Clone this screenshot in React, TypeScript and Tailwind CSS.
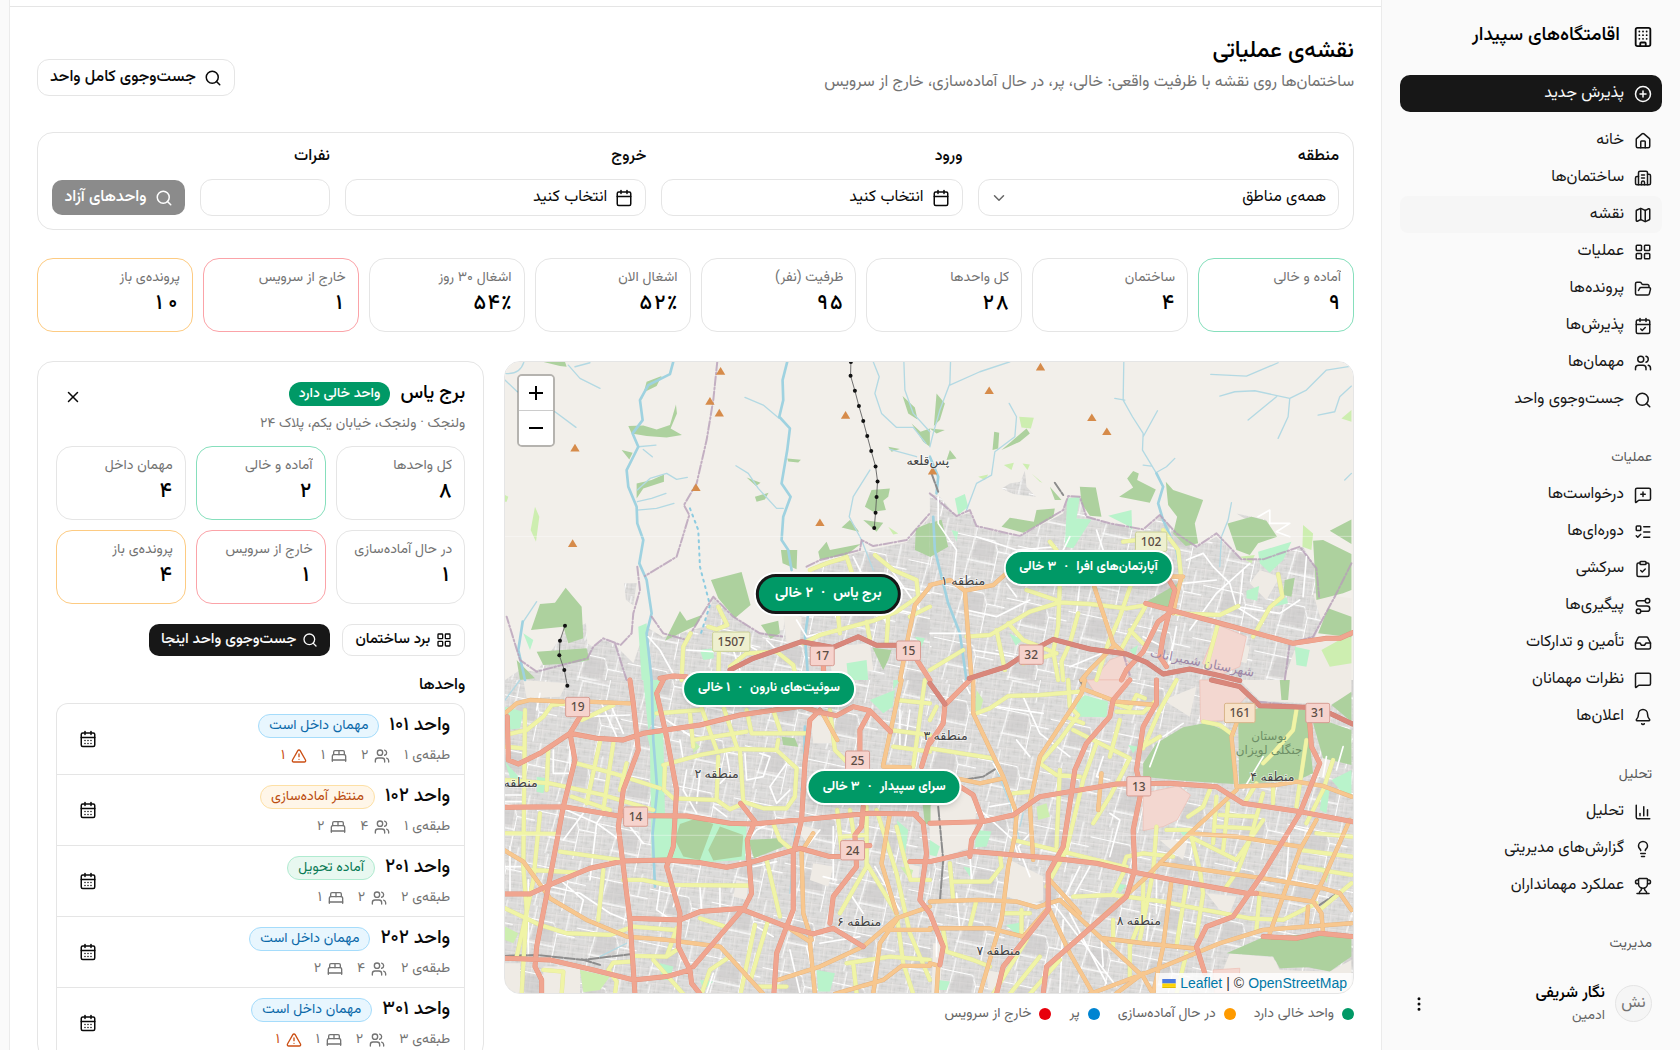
import type { ReactNode } from "react"
import {
  BedDouble,
  Bell,
  Building,
  Building2,
  Calendar,
  CalendarCheck,
  CalendarDays,
  ChartColumn,
  ChevronDown,
  CirclePlus,
  ClipboardCheck,
  EllipsisVertical,
  FolderOpen,
  House,
  Inbox,
  LayoutGrid,
  Lightbulb,
  ListTodo,
  Map as MapIcon,
  MessageSquare,
  MessageSquarePlus,
  Route,
  Search,
  TriangleAlert,
  Trophy,
  Users,
  X,
  type LucideIcon,
} from "lucide-react"
import clsx from "clsx"

interface NavItem {
  label: string
  icon: LucideIcon
  active?: boolean
}

type Tone = "plain" | "green" | "red" | "amber"

interface Stat {
  label: string
  value: string
  tone?: Tone
}

interface Unit {
  name: string
  floor: string
  status: "inside" | "waiting" | "ready"
  guests: string
  beds: string
  alerts?: string
}

const mainNav: NavItem[] = [
  { label: "خانه", icon: House },
  { label: "ساختمان‌ها", icon: Building2 },
  { label: "نقشه", icon: MapIcon, active: true },
  { label: "عملیات", icon: LayoutGrid },
  { label: "پرونده‌ها", icon: FolderOpen },
  { label: "پذیرش‌ها", icon: CalendarCheck },
  { label: "مهمان‌ها", icon: Users },
  { label: "جست‌وجوی واحد", icon: Search },
]

const operationsNav: NavItem[] = [
  { label: "درخواست‌ها", icon: MessageSquarePlus },
  { label: "دوره‌ای‌ها", icon: ListTodo },
  { label: "سرکشی", icon: ClipboardCheck },
  { label: "پیگیری‌ها", icon: Route },
  { label: "تأمین و تدارکات", icon: Inbox },
  { label: "نظرات مهمانان", icon: MessageSquare },
  { label: "اعلان‌ها", icon: Bell },
]

const analysisNav: NavItem[] = [
  { label: "تحلیل", icon: ChartColumn },
  { label: "گزارش‌های مدیریتی", icon: Lightbulb },
  { label: "عملکرد مهمانداران", icon: Trophy },
]

const overview: Stat[] = [
  { label: "آماده و خالی", value: "۹", tone: "green" },
  { label: "ساختمان", value: "۴" },
  { label: "کل واحدها", value: "۲۸" },
  { label: "ظرفیت (نفر)", value: "۹۵" },
  { label: "اشغال الان", value: "۵۲٪" },
  { label: "اشغال ۳۰ روز", value: "۵۴٪" },
  { label: "خارج از سرویس", value: "۱", tone: "red" },
  { label: "پرونده‌ی باز", value: "۱۰", tone: "amber" },
]

const buildingStats: Stat[] = [
  { label: "کل واحدها", value: "۸" },
  { label: "آماده و خالی", value: "۲", tone: "green" },
  { label: "مهمان داخل", value: "۴" },
  { label: "در حال آماده‌سازی", value: "۱" },
  { label: "خارج از سرویس", value: "۱", tone: "red" },
  { label: "پرونده‌ی باز", value: "۴", tone: "amber" },
]

const units: Unit[] = [
  { name: "واحد ۱۰۱", floor: "طبقه‌ی ۱", status: "inside", guests: "۲", beds: "۱", alerts: "۱" },
  { name: "واحد ۱۰۲", floor: "طبقه‌ی ۱", status: "waiting", guests: "۴", beds: "۲" },
  { name: "واحد ۲۰۱", floor: "طبقه‌ی ۲", status: "ready", guests: "۲", beds: "۱" },
  { name: "واحد ۲۰۲", floor: "طبقه‌ی ۲", status: "inside", guests: "۴", beds: "۲" },
  { name: "واحد ۳۰۱", floor: "طبقه‌ی ۳", status: "inside", guests: "۲", beds: "۱", alerts: "۱" },
]

const unitStatus = {
  inside: { label: "مهمان داخل است", className: "border-[#a5dcfb] bg-[#e8f6fe] text-[#0b69a9]" },
  waiting: { label: "منتظر آماده‌سازی", className: "border-[#fde0a5] bg-[#fff6e8] text-[#bb4d10]" },
  ready: { label: "آماده تحویل", className: "border-[#b0ebd0] bg-[#e8f8f0] text-[#0a7a55]" },
}

const toneBorder: Record<Tone, string> = {
  plain: "border-[#e5e5e5]",
  green: "border-[#86dfbc]",
  red: "border-[#fba3a8]",
  amber: "border-[#fdcb82]",
}

// positions are a share of the map's width and height
const pins = [
  { label: "آپارتمان‌های افرا", free: "۳ خالی", x: 68.8, y: 32.6 },
  { label: "برج یاس", free: "۲ خالی", x: 38.1, y: 36.8, selected: true },
  { label: "سوئیت‌های نارون", free: "۱ خالی", x: 31.1, y: 51.8 },
  { label: "سرای سپیدار", free: "۳ خالی", x: 44.7, y: 67.4 },
]

const legend = [
  { label: "واحد خالی دارد", dot: "bg-[#009966]" },
  { label: "در حال آماده‌سازی", dot: "bg-[#fe9a00]" },
  { label: "پر", dot: "bg-[#0084d1]" },
  { label: "خارج از سرویس", dot: "bg-[#e7000b]" },
]

// The base map is kept as four tiles, each with one path per feature kind.
const tiles = [
  {
    x: 0,
    y: 0,
    urban:
      "M15 990L60 960L110 965L170 880L190 850L258 820L262 880L280 892L310 868L345 885L400 940L438 830L490 862L545 850L610 830L640 745L700 800L780 850L850 840L860 760L900 700L960 640L1080 605L1220 577L1255 540L1290 500V992H15Z M372 700L410 700L400 766L378 750Z",
    light: "M850 790L905 800L900 870L860 880Z M980 890L1110 880L1120 960L1000 985Z",
    lime: "M15 435L25 440L20 455L15 455Z M105 470L118 500L108 575L92 540Z M1165 530L1195 550L1180 553Z",
    mint: "M415 830L440 820L455 990H425Z M600 900L640 895L642 925L610 930Z M1040 940L1100 930L1105 990H1045Z M1245 860L1275 865L1265 890Z M70 850L100 870L90 900Z M180 925L260 910L250 935Z",
    forest:
      "M120 33L195 35L200 50L180 48Z M440 95L485 78L470 108L435 125L425 150Z M385 228L430 226L470 238L510 225L528 163L531 190L512 235L546 255L500 262L440 258L395 250Z M365 300L398 308L388 328Z M410 400L455 390L492 373L492 395L430 415L410 445Z M740 382L782 398L768 408Z M765 440L806 428L795 448L770 455Z M862 325L903 329L895 337L865 334Z M1208 138L1245 172L1253 208L1225 190Z M1235 220L1262 245L1290 235V290L1270 275Z M1165 290L1200 297L1175 305Z M1115 420L1170 415L1165 440L1150 452L1158 480L1120 485L1095 470Z M1090 510L1150 518L1130 545Z M1050 510L1078 545L1025 532Z M633 690L725 666L752 765L705 805L655 745Z M540 783L560 812L606 795L590 825L495 872Z M783 825L835 812L840 850L812 866Z M843 600L892 600L890 658L848 640Z M955 605L980 575L990 600L1082 582L1040 615L960 628Z M1248 535L1290 518V620L1245 600Z M93 840L120 762L165 758L197 713L245 770L250 865L205 880L190 830Z M110 905L260 895L268 930L215 940L130 945Z M50 930L105 985L60 990Z M1118 893L1175 900L1165 930L1150 960Z",
    pink: "",
    water:
      "M520 35L510 72L445 105L420 150L428 210L398 250L415 290L380 360L385 410L410 470L412 520L430 570L418 640L440 690L455 790L440 850L455 990 M862 35L848 90L850 150L838 200L870 235L862 300L845 400L872 440L850 500L845 570L865 600L875 660 M68 815L55 900L75 990 M925 790L915 860L925 990",
    stream:
      "M15 70Q60 75 72 35 M205 45L240 85L300 115 M270 38L225 50 M15 90L52 125 M165 185L228 232 M735 142L790 165L838 205 M708 347L745 370L775 415L830 475L850 475 M1120 35L1138 80L1125 130L1145 190L1190 232L1240 232L1278 280 M1212 35L1215 120L1240 190L1290 245 M1110 360L1060 440L1048 500L1085 570L1120 660 M110 755L70 815 M412 420L450 385L500 370L530 388L562 382 M412 455L455 445L498 430 M412 480L470 475L522 460 M415 290L468 285 M430 298L457 320 M1170 298L1250 320",
    dashed: "M570 475L595 540L600 650L630 765L600 860",
    border:
      "M652 35L640 150L620 270L590 400L552 465L568 495L530 620L435 678 M412 650L420 720L400 790L395 850L362 885L310 865L280 890L262 925L110 965L60 930L20 800 M345 880L380 990 M455 800L490 850L560 870L640 740L700 800L780 850L850 860 M920 650L960 630L1080 600L1085 570L1120 588L1220 570L1255 530L1290 490",
    white:
      "M445 860L480 900L530 990 M560 900L640 905 M700 860L770 900 M890 810L920 860L1000 840 M950 700L1100 760L1240 790 M1160 640L1260 780 M960 680L1020 830 M1060 620L1160 820 M1140 700L1290 730 M700 900L720 960 M800 870L830 900",
    yellow:
      "M655 770L682 825L650 838L625 830 M545 990L550 890L572 850 M930 660L980 640L1040 622 M1040 620L1060 680L1110 740 M1125 615L1180 660L1250 690L1255 740L1190 785L1120 812L960 855L910 880 M1015 800L1020 850 M1100 815L1110 870 M1165 800L1160 880 M658 860L655 990 M690 950L740 910L830 905L880 945L890 990 M1290 770L1230 800",
    orange: "M1290 710L1245 765L1225 860L1200 990",
    red: "M480 985L520 978L560 980 M968 895L972 980 M1245 920L1290 990",
    trunk: "M690 960L760 925L905 875L1000 892L1075 860L1130 886L1190 886",
    rail: "",
  },
  {
    x: 1290,
    y: 0,
    urban:
      "M0 430L30 440L80 500L120 488L140 530L265 560L340 522L400 490L415 440L450 440L470 500L540 520L640 545L690 500L740 550L800 592L860 560L935 628L1000 630L1120 590L1160 660L1165 740L1195 770L1165 840L1100 990H0Z M215 415L240 400L272 395L285 362L290 410L318 440L250 432Z M920 490L1010 510L1000 540Z",
    light:
      "M1150 730L1265 745V800L1180 830Z M1100 885L1265 865V990H1062Z M990 660L1050 680L1010 750L960 700Z M640 640L700 650L690 690L640 680Z M900 870L960 890L950 940L905 930Z",
    lime: "M268 200L312 203L303 235L275 232Z M1120 525L1150 550L1145 600L1118 590Z M222 345L252 338L245 360Z M278 340L300 343L293 360Z M305 370L338 398L330 395Z M1235 205L1265 180V215Z M145 380L175 373L165 390Z M930 620L975 615L965 640Z M1175 900L1265 850V940L1200 950Z",
    mint: "M412 445L450 440L440 505L485 508L430 595L405 590Z M75 445L105 432L115 470L85 495Z M985 605L1085 575L1060 630L1020 668L990 640Z M535 497L605 480L607 540L590 525Z M238 850L278 870L258 887Z M950 722L988 708L982 752L950 745Z M65 540L85 545L80 575Z M1030 770L1070 740L1075 760Z M600 900L625 885L615 920Z M1095 890L1140 900L1130 950L1100 945Z",
    forest:
      "M20 130L45 160L30 210L12 228Z M0 235L45 240L20 250Z M193 245L208 248L205 295L188 300Z M215 300L255 265L290 235L300 250L270 275Z M450 410L498 412L515 500L480 497L455 460Z M215 530L240 503L312 515L320 480L375 475L370 502L280 548Z M592 385L610 363L627 370L622 390L678 418L660 458L568 440L610 412Z M708 395L730 420L820 450L795 520L805 580L768 588L730 550L742 500L715 465Z M893 520L965 500L1010 512L1042 560L985 580L960 615L920 600Z M1200 542L1265 508V582Z M1150 572L1180 570L1265 612V720L1240 730L1160 750Z M1195 775L1265 800V862L1165 850Z M0 520L35 508L55 590L0 622Z M1065 690L1095 683L1085 740L1060 735Z M650 755L745 700L715 775Z M360 410L395 450L375 450Z M60 300L80 325L50 330Z",
    pink: "M865 825L950 860L930 950L870 975L818 940Z M490 990L540 930L580 915L605 950L590 990Z",
    water: "M680 370L700 410L685 460L700 510L740 600L750 660 M0 320L25 380L20 430 M10 500L15 600L55 760L90 850L110 990",
    stream:
      "M62 35L60 100L30 180L10 250L0 290 M240 35L150 65L60 105 M238 160L260 200L255 260L195 305L185 375L140 400L110 480 M582 35L580 150L608 200L640 250L638 300L680 370 M555 145L585 150 M683 182L640 260 M735 325L710 350L678 368 M640 345L665 348 M843 73L950 78L1045 38 M870 138L915 125L975 122L1080 145L1130 120L1190 60L1265 48 M1080 145L1075 200L1045 265 M1040 140L955 210 M1165 195L1215 185L1230 140L1265 108 M905 458L895 510L875 560L870 650 M1245 390L1265 370",
    dashed: "",
    border:
      "M0 430L80 498L120 480L140 528L270 558L400 480L415 438L450 440L470 500L540 520L640 538L690 495L740 550L800 590L860 550L935 628L1000 628L1110 590L1160 655L1168 740 M1265 640L1215 740L1150 860L1080 880L1065 990 M580 910L600 975",
    white:
      "M25 440L25 520L80 600L70 700L120 680 M140 560L260 600L380 590 M420 560L400 600 M500 540L520 600 M110 780L200 800L300 750 M230 700L260 740 M450 700L440 790 M660 600L640 560 M770 630L820 610L850 650L900 700L920 770L1050 790L1110 750 M860 690L760 700 M780 840L860 730L960 640 M985 500L1020 480L1020 520L1080 520L1040 545L1080 560 M920 770L1000 820 M940 660L930 760 M1130 620L1120 740 M130 900L250 920 M420 950L540 900 M740 830L720 940 M640 860L700 890 M0 850L110 850",
    yellow:
      "M110 860L180 855L300 785L390 757L480 762L590 775L650 765 M390 700L385 830L370 905L385 990 M200 840L225 960 M235 820L280 870L380 910 M445 790L420 880L395 935L400 990 M605 700L570 800L535 880L500 990 M645 772L600 850L570 905 M290 720L385 752 M580 575L620 570 M700 540L745 600L755 690 M740 790L870 795L925 768 M1045 672L1058 740L1020 772L970 860 M865 820L830 950 M600 840L650 890 M360 575L380 600 M280 940L380 910 M0 960L100 900",
    orange: "M0 705L60 690L105 722L190 705L240 660 M105 722L125 990 M490 700L550 880L585 912 M550 890L480 960L455 990 M755 680L740 740L730 790 M600 680L760 680",
    red: "M648 760L740 785L880 822L1090 880L1190 865L1230 865L1268 848 M718 690L735 720L700 860L690 920 M725 785L685 815L640 905L590 960L575 990 M690 920L710 950",
    trunk: "M118 985L230 950L290 910L370 868L480 897L590 912L650 937L700 972L780 957L870 977L930 992",
    rail: "M375 398L400 435 M5 370L25 425",
  },
  {
    x: 0,
    y: 990,
    urban: "M15 0H1292V945H15Z",
    light:
      "M15 850L60 850V945H15Z M130 860L240 860V945H130Z M930 100L1000 120L995 190L940 190Z M940 550L1000 560L985 620L930 600Z M710 600L745 610L740 660L700 650Z M880 430L960 450L920 490Z M70 0L200 10L180 50L80 55Z M1215 550L1260 560L1255 600L1220 595Z",
    lime: "M240 870L330 890L300 930L250 937Z M1200 560L1240 570L1230 600Z M580 180L600 200L580 220Z M15 740L55 760L40 790L15 780Z",
    mint: "M430 0L480 0L480 90L445 150Z M440 160L490 160L495 400L560 410L740 440L735 540L600 548L455 540L450 200Z M1110 60L1185 30L1178 80L1150 100Z M15 245L65 300L40 322Z M950 870L1005 880L990 935L955 935Z M1190 420L1225 450L1215 530Z M15 80L70 95L60 145L20 150Z M1180 0L1200 0L1180 30Z M600 900L640 905L610 930Z M110 290L140 295L130 340L110 335Z M480 850L520 860L510 900L485 900Z",
    forest:
      "M540 432L590 415L640 432L600 540L550 530L525 480Z M660 440L730 465L725 530L640 542L625 510Z M745 480L830 475L852 500L762 535Z M1268 370H1292V432H1275Z M845 170L885 175L895 200L850 195Z",
    pink: "",
    water: "M455 0L460 180L472 330L458 460L465 620 M915 140L912 290L905 330",
    stream: "M885 440L870 640 M300 830L380 790 M15 60L60 0 M600 0L560 20",
    dashed: "",
    border: "",
    white:
      "M15 345H70 M15 365H70 M85 600V820 M110 610L240 640L330 700L380 720 M200 390L290 430L310 400 M290 430L360 480 M290 430L270 600 M250 400L190 480 M300 60L350 170 M330 70L370 160 M260 110L390 105 M540 180L550 240 M500 120L590 180 M560 270L550 330L590 400 M600 280L590 370 M640 380L680 410 M680 220L690 280L660 310 M735 220L740 300L790 290L810 230L780 220 M860 250L810 320L830 370L870 330 M770 450L745 480 M770 450L800 435 M480 620L470 690L500 710 M540 620L520 680 M600 620L605 690 M660 620V690 M760 560L830 545 M640 880L620 940 M770 740L820 770 M870 810L900 940 M920 800L940 880 M960 450L920 500 M970 590L1010 600 M1000 440V600 M1100 560L1030 690 M1110 560L1180 690 M1125 560L1200 690 M1050 640L1090 700 M960 790L1080 770 M180 600L250 660L240 700 M120 40L110 90 M390 440L430 490 M15 560H80 M30 500V640 M1200 90V200 M1230 90L1215 200 M160 210V280H210V200",
    yellow:
      "M75 90L70 560L80 690L70 850L65 945 M15 165L80 150L130 110L155 75L200 70 M145 205L140 330 M15 300L150 310L310 345L460 390 M15 460L170 462 M180 515L360 540 M95 570L230 578 M120 400L100 600L75 720L50 830 M15 685L120 735L200 760L330 765L400 740L520 750 M230 250L340 280L480 325 M340 190L310 390 M300 185L260 370 M215 350L330 390 M310 570L295 720 M370 600L430 600L500 615L750 617 M470 100L600 90 M605 85L650 210 M672 85L712 205 M740 90L755 160L920 160 M580 180L740 155 M490 255L600 225L700 207L830 210L890 265L885 350L860 385L790 385L730 365L720 210 M495 255L492 330L520 355L650 360L690 388L720 375 M655 230L650 360 M830 210L835 180 M820 430L840 480L870 505 M800 540L840 710 M765 735L722 942 M805 720L752 900 M600 715L675 740 M460 840L550 942 M400 828L500 830L530 810 M530 745L500 830 M690 830L630 870L605 942 M990 90L1005 210L1045 250 M1012 390L1025 510 M1050 390L1062 465 M1100 380L1100 560L1020 700 M1130 390L1190 580L1230 760L1290 900 M1100 550L1190 700L1210 850L1240 942 M1170 150L1290 165 M1180 200L1290 215 M1275 0L1240 260 M1190 60L1290 70 M1215 540L1232 600L1290 600 M1190 440L1215 540 M1040 850L1170 830L1290 840 M130 870L190 875L185 942 M345 942L350 905L325 870L340 848L390 845 M1030 470L1100 465 M770 920L860 920 M360 330L380 250 M245 120L340 75 M570 100L580 200 M820 90L840 150 M15 200L70 205 M1060 850L1070 940",
    orange:
      "M15 100L50 70L90 60L190 65 M260 65L390 70 M15 512L70 545L150 655L260 720L380 770L500 780L660 800L790 942 M965 95L1012 180 M860 740L930 785L945 942 M940 460L905 515L910 700L935 780 M1205 0L1150 255 M1150 260L1230 262 M835 900L960 860L1090 800L1190 715L1290 680 M1170 400L1145 550L1190 700 M1190 720L1140 790L1120 942 M1150 750L1290 750 M1005 942L1150 900L1205 858L1290 858",
    red: "M22 110L25 240L55 252L120 220L210 160L240 110 M210 160L225 240L190 380L145 620L110 800L105 860L125 900L125 942 M210 160L290 175L370 180L430 160L600 135L720 105L930 75 M490 0L470 40L500 170L530 330L520 500L500 560L540 700L535 800L570 870L575 910L600 942 M390 0L400 70L415 210L370 330L355 440L375 600L390 720L405 942 M15 382L190 380L350 407L440 407L560 408L690 430L760 432L950 415L1110 400L1250 402 M15 642L90 642L160 610L270 565L370 543L500 540L600 548L680 562L750 548L900 505L990 530L1050 530 M722 370L765 425L742 480L755 640L730 690L860 740L940 762L1000 745L1090 800 M390 715L540 720L600 695L730 685L580 860 M960 90L930 120L915 250L905 420L880 520L880 690L860 740L830 820L822 942 M880 70L960 97L1010 107L1060 80L1110 92L1172 155 M1110 95L1080 150L1080 230 M1090 380L1085 440L1065 465L1070 560L1000 650L990 730 M15 835L150 840L280 870L400 900L500 890L570 870 M1290 180L1265 260 M1240 400L1270 430L1280 520L1260 660L1290 700 M1230 545L1290 545 M1110 497L1060 500",
    trunk: "",
    rail: "M15 828L110 825L250 840L390 823 M245 838L300 855",
  },
  {
    x: 1290,
    y: 990,
    urban: "M0 0H1270V945H0Z",
    light:
      "M240 540L340 590L340 660L300 672L230 650Z M0 380L90 300L140 380L130 500L0 545Z M930 0H1265V40L1200 75L990 62Z M900 820L1030 832L1050 870L1200 875L1265 840V945H850Z M690 480L775 478L760 540Z M830 640L920 650L900 700L870 690Z M1180 230L1210 240L1190 300L1150 280Z M170 870L220 880L210 930L175 930Z M10 790L40 790L30 940H5Z M700 60L800 20L780 110Z",
    lime: "M140 30L160 60L150 95L135 90Z M320 380L350 370L360 410L325 420Z M1170 560L1200 570L1190 610Z",
    mint: "M440 70L465 45L535 65L530 112L440 110Z M140 450L185 455L170 500L135 503Z M1205 300L1265 270V350L1240 340Z M228 735L270 728L268 770Z M595 195L625 200L610 220Z M0 480L30 500L20 530L0 525Z M1180 320L1200 325L1190 400L1170 390Z M25 900L60 905L50 930H28Z M555 610L590 615L570 640Z M740 440L790 460L770 480Z M100 560L125 565L120 590Z M860 20L890 40L870 60Z",
    forest:
      "M680 190L760 142L830 128L905 160L912 312L760 302L640 290L640 250Z M925 100L1000 80L1130 90L1150 280L1100 302L928 312Z M1150 130L1180 120L1265 150V255L1180 235Z M1205 75L1265 35V125Z M890 820L1000 772L1180 760L1265 775V830L1200 875L1135 862L1050 865L1030 830Z M1050 0L1080 0L1075 60H1055Z",
    pink: "M470 0H600L555 65L500 45Z M810 0H900L960 40L880 122L812 125Z M640 340L745 318L782 345L742 420L700 440L640 452Z M850 870L930 865L925 945H855Z",
    water: "",
    stream: "M185 230L240 370L270 480 M280 400L270 440",
    dashed: "",
    border: "M985 65L1130 80 M1200 100L1265 130",
    white:
      "M190 250L240 330L250 400 M180 380L240 370 M260 180L300 230 M300 380L310 450L265 500L300 590 M150 390L250 480L270 540 M330 160L420 230 M520 230L500 290L540 300 M480 560L430 650 M450 560L400 660 M540 400L570 420L540 530 M370 670L560 920 M420 700L530 910 M400 720L390 940 M515 780L520 860 M680 600L680 700 M660 700L650 780 M740 480L790 490L780 540 M1080 440L1070 600 M1080 440L1140 455 M1190 230L1180 290 M1240 200L1220 270 M690 180L660 260 M760 130L700 170 M1000 230L940 330 M80 640L90 750 M120 520L125 600 M30 600L60 590 M20 750V830 M100 0L120 40 M200 80L340 100 M280 50L330 160",
    yellow:
      "M140 100L180 85L235 48L330 45L450 35 M415 0L420 80L445 105L390 180L330 250L380 285L450 290 M430 150L600 235L540 350L490 430 M570 120L540 230 M555 70L600 85L620 45L645 55 M560 95L640 98L680 60 M740 0L690 90L640 205 M500 190L460 300L410 510L350 620 M390 270L380 500 M250 480L420 520L580 560L590 530L640 520L730 530 M250 340L300 335 M0 205L190 235 M640 200L690 170 M820 125L870 135L910 165 M1100 90L1090 150L1030 220L1000 250 M1130 180L1100 380 M980 310L950 360 M1030 320L1030 370 M680 440L670 580 M710 450L780 450L810 570L820 640 M840 330L820 380L775 410 M860 350L850 490 M895 370L880 510 M870 405L980 410 M860 440L960 445 M1000 340L960 480L925 570L890 620 M780 470L920 540L1000 420 M1210 240L1180 330L1130 430 M1160 460L1265 470 M1110 510L1265 530 M1110 560L1265 585 M640 600L640 700L600 800 M430 650L550 645L700 665L800 685L960 715L1060 720L1160 670 M665 600L630 780 M770 610L740 800 M990 640L980 750 M820 640L800 770 M550 720L550 800 M60 550L70 660 M70 605L180 605L215 560L210 520 M140 660L120 740 M275 690L275 770 M220 700L300 700 M40 750L50 815L130 840L180 860 M290 780L190 942 M330 830L240 942 M390 840L300 942 M600 790L600 900 M770 820L740 942 M1265 610L1170 690 M550 640L590 560 M460 130L410 110 M20 80L0 120",
    orange:
      "M130 0L130 100L175 195L220 290L260 400L255 470L235 560L215 720L150 942 M465 0L455 40L330 230L300 370L260 400 M455 25L560 65L680 75 M515 280L505 390 M80 295L150 310L220 295 M0 665L150 660L260 665L320 682L390 660L520 780L640 890L670 942 M350 670L420 820L490 942 M0 745L180 745L280 770L350 690 M360 600L450 700 M520 775L640 790L790 805 M920 330L780 460L640 600L430 790 M780 460L920 470L1110 500 M690 550L860 575L1000 595L1180 625L1230 640L1265 690 M480 942L700 860L870 790L1000 750L1130 740L1265 730 M725 600L700 800L670 942 M1265 350L1180 318L1100 305L1040 315L920 320 M1260 420L1180 600L1150 660 M1160 420L1110 510L1020 760 M980 640L1150 665L1175 700L1180 760 M920 130L905 170L920 320 M0 850L25 857L20 942 M560 940L640 880 M1135 680L1130 740 M310 540L300 370",
    red: "M0 430L160 425L250 405L330 350L420 335L560 312L720 310L860 320L940 370L1110 395L1268 425 M90 320L130 345L158 420L125 480L120 530 M0 545L130 515L370 535L500 550L620 578L730 600L950 640L980 640 M120 0L45 75L40 130L0 190 M600 0L550 60L540 110L470 190L435 270L425 340L400 500L355 580L355 690L220 860L200 942 M680 0L680 70L640 140L620 270L635 330L610 450L615 570L590 650L430 790L350 860L340 942 M1140 130L1145 200L1170 250L1110 400L1000 580L910 710L830 740L800 800L825 880 M1000 770L1100 775L1170 760L1268 770 M0 700L40 800L30 855",
    trunk: "M0 10L45 72 M845 0L930 20L990 77L1130 82L1200 100L1268 132",
    rail: "M25 380L40 540L30 665 M1170 675L1230 635 M100 300L160 290L200 265 M450 0L460 20",
  },
]

const peaks = [
  [225, 293], [218, 580], [662, 63], [630, 153], [658, 188], [588, 412], [960, 517],
  [1037, 195], [1298, 362], [1622, 50], [1468, 121], [1776, 202], [1821, 244],
]

const liftTowers = [
  [1053, 36], [1052, 77], [1065, 122], [1077, 168], [1090, 213], [1102, 258], [1114, 303],
  [1127, 349], [1133, 394], [1130, 441], [1127, 488], [1123, 534],
]

const westLift = [[195, 827], [180, 872], [178, 916], [193, 960], [202, 1007]]

const shields = [
  { text: "1507", x: 694, y: 875, w: 112, fill: "#eef0cf", stroke: "#c9cf95" },
  { text: "17", x: 967, y: 918, w: 72, fill: "#f6d3cd", stroke: "#d79c92" },
  { text: "15", x: 1226, y: 902, w: 72, fill: "#f6d3cd", stroke: "#d79c92" },
  { text: "102", x: 1954, y: 575, w: 94, fill: "#eef0cf", stroke: "#c9cf95" },
  { text: "32", x: 1594, y: 914, w: 72, fill: "#f6d3cd", stroke: "#d79c92" },
  { text: "19", x: 233, y: 1071, w: 72, fill: "#f6d3cd", stroke: "#d79c92" },
  { text: "25", x: 1073, y: 1232, w: 72, fill: "#f6d3cd", stroke: "#d79c92" },
  { text: "14", x: 407, y: 1400, w: 72, fill: "#f6d3cd", stroke: "#d79c92" },
  { text: "24", x: 1058, y: 1501, w: 72, fill: "#f6d3cd", stroke: "#d79c92" },
  { text: "161", x: 2220, y: 1089, w: 92, fill: "#f7e2c9", stroke: "#d8b58a" },
  { text: "31", x: 2454, y: 1089, w: 72, fill: "#f6d3cd", stroke: "#d79c92" },
  { text: "13", x: 1917, y: 1309, w: 72, fill: "#f6d3cd", stroke: "#d79c92" },
]

const places = [
  { text: "پس‌قلعه", x: 1284, y: 334 },
  { text: "منطقه ۱", x: 1390, y: 694 },
  { text: "منطقه ۲", x: 650, y: 1274 },
  { text: "منطقه", x: 62, y: 1301 },
  { text: "منطقه ۳", x: 1337, y: 1159 },
  { text: "منطقه ۴", x: 2318, y: 1284 },
  { text: "منطقه ۶", x: 1078, y: 1719 },
  { text: "منطقه ۷", x: 1496, y: 1806 },
  { text: "منطقه ۸", x: 1917, y: 1715 },
]

type Kind = Exclude<keyof (typeof tiles)[number], "x" | "y">

function Layer({ kind, ...rest }: { kind: Kind } & Omit<React.SVGProps<SVGPathElement>, "kind">) {
  return (
    <>
      {tiles.map((t, i) => (
        <path key={i} d={t[kind]} transform={`translate(${t.x} ${t.y})`} {...rest} />
      ))}
    </>
  )
}

function Roads({ kind, width, fill, casing }: { kind: Kind; width: number; fill: string; casing: string }) {
  return (
    <g fill="none" strokeLinejoin="round" strokeLinecap="round">
      <Layer kind={kind} stroke={casing} strokeWidth={width + 2} />
      <Layer kind={kind} stroke={fill} strokeWidth={width} />
    </g>
  )
}

function BaseMap() {
  return (
    <svg
      className="absolute inset-0 h-full w-full"
      viewBox="15 33 2544 1899"
      preserveAspectRatio="xMidYMid slice"
      aria-hidden="true"
    >
      <defs>
        <pattern id="blocks" width="54" height="42" patternUnits="userSpaceOnUse" patternTransform="rotate(7)">
          <rect width="54" height="42" fill="#dcdbda" />
          <path d="M0 6H54M0 16H30M0 25H54M30 34H54M8 0V25M22 6V42M36 0V34M46 16V42" stroke="#c3c2c1" strokeWidth="1.3" />
          <path d="M0 8H54M0 27H54M24 8V42M38 0V34" stroke="#f3f2f1" strokeWidth="1.6" />
        </pattern>
        <pattern id="streets" width="190" height="160" patternUnits="userSpaceOnUse" patternTransform="rotate(12)">
          <path d="M0 40H120L135 70H190M60 0V40L50 160M135 70V160M50 110H135M160 0V70" stroke="#fff" strokeWidth="3" fill="none" />
          <path d="M70 45H125V100H60Z" fill="#c9c8c8" opacity=".5" />
        </pattern>
      </defs>

      <rect x="0" y="0" width="2600" height="1960" fill="#f2efea" />
      <Layer kind="urban" fill="url(#blocks)" />
      <Layer kind="urban" fill="url(#streets)" />
      <Layer kind="light" fill="#efebe5" />
      <Layer kind="lime" fill="#cdeeb0" />
      <Layer kind="mint" fill="#b9f3cb" />
      <Layer kind="forest" fill="#add19e" />
      <Layer kind="pink" fill="#f3d7d0" stroke="#eebcb2" strokeWidth="2" />

      <g fill="none" strokeLinejoin="round" strokeLinecap="round">
        <Layer kind="stream" stroke="#b3d9e3" strokeWidth="4" />
        <Layer kind="water" stroke="#9fd2e0" strokeWidth="8" />
        <Layer kind="dashed" stroke="#8ccbe0" strokeWidth="6" strokeDasharray="6 14" />
        <Layer kind="border" stroke="#b79fb8" strokeWidth="6" strokeDasharray="26 7 5 7" opacity=".8" />
        <Layer kind="white" stroke="#ffffff" strokeWidth="5" />
        <Layer kind="rail" stroke="#8c8c8c" strokeWidth="6" strokeDasharray="30 6" />
      </g>

      <Roads kind="yellow" width={11} fill="#f0f4a6" casing="#e0e49b" />
      <Roads kind="orange" width={11} fill="#f7c78f" casing="#e6b27b" />
      <Roads kind="red" width={13} fill="#f0a590" casing="#e39079" />
      <Roads kind="trunk" width={13} fill="#d9877b" casing="#c97c72" />

      <g stroke="#555" strokeWidth="2.5" fill="none">
        <polyline points={liftTowers.map((p) => p.join(",")).join(" ")} />
        <polyline points={westLift.map((p) => p.join(",")).join(" ")} />
      </g>
      {[...liftTowers, ...westLift].map(([x, y]) => (
        <circle key={`${x}-${y}`} cx={x} cy={y} r="6" fill="#111" />
      ))}
      {peaks.map(([x, y]) => (
        <path key={`${x}-${y}`} d={`M${x} ${y - 12}L${x + 14} ${y + 11}H${x - 14}Z`} fill="#d68b4a" />
      ))}
      <path d="M15 559H2560M15 1456H2560" stroke="#fff" strokeWidth="2" opacity=".6" />

      <g fontFamily="'Noto Sans', 'DejaVu Sans', sans-serif" textAnchor="middle">
        {shields.map((s) => (
          <g key={s.text}>
            <rect x={s.x - s.w / 2} y={s.y - 29} width={s.w} height="58" rx="5" fill={s.fill} stroke={s.stroke} strokeWidth="3" />
            <text x={s.x} y={s.y + 13} fontSize="36" fontWeight="500" fill="#5c4d45">
              {s.text}
            </text>
          </g>
        ))}
        {places.map((p) => (
          <text
            key={p.text + p.x}
            x={p.x}
            y={p.y + 10}
            fontSize="38"
            fill="#444"
            stroke="#fff"
            strokeOpacity=".6"
            strokeWidth="5"
            paintOrder="stroke"
          >
            {p.text}
          </text>
        ))}
        <g fill="#6d8f66" fontSize="36">
          <text x="2308" y="1170">بوستان</text>
          <text x="2308" y="1213">جنگلی لویزان</text>
        </g>
        <text x="2105" y="950" fontSize="38" fill="#9c86a6" transform="rotate(11 2105 950)">
          شهرستان شمیرانات
        </text>
      </g>
    </svg>
  )
}

function NavList({ items }: { items: NavItem[] }) {
  return (
    <ul>
      {items.map(({ label, icon: Icon, active }) => (
        <li key={label}>
          <a
            href="#"
            aria-current={active ? "page" : undefined}
            className={clsx("flex h-[37px] items-center gap-2.5 rounded-lg px-2.5 text-base text-[#171717]", active && "bg-[#f6f6f6]")}
          >
            <Icon className="size-[18px]" />
            <span>{label}</span>
          </a>
        </li>
      ))}
    </ul>
  )
}

function NavLabel({ children }: { children: ReactNode }) {
  return <h2 className="flex h-[37px] items-center px-2.5 text-sm text-[#5a5a5a]">{children}</h2>
}

function StatCard({ label, value, tone = "plain" }: Stat) {
  return (
    <div className={clsx("h-[74px] rounded-2xl border bg-white px-3 pt-[7px]", toneBorder[tone])}>
      <p className="truncate text-sm leading-6 text-[#737373]">{label}</p>
      <p className="text-[21px] leading-7 font-medium text-black tabular-nums">{value}</p>
    </div>
  )
}

function DateField({ id, label }: { id: string; label: string }) {
  return (
    <div className="flex flex-col gap-2.5">
      <label htmlFor={id} className="text-base leading-6 font-medium">
        {label}
      </label>
      <button id={id} type="button" className="flex h-[37px] items-center gap-2 rounded-xl border border-[#e5e5e5] px-3 text-base">
        <Calendar className="size-[18px]" />
        <span>انتخاب کنید</span>
      </button>
    </div>
  )
}

function UnitRow({ unit }: { unit: Unit }) {
  const status = unitStatus[unit.status]
  return (
    <li className="flex h-[71px] items-center justify-between border-b border-[#e5e5e5] px-3.5">
      <div className="pt-0.5">
        <div className="flex items-center gap-2.5">
          <span className="text-[19px] leading-7 font-medium">{unit.name}</span>
          <span className={clsx("flex h-6 items-center rounded-full border px-2.5 text-sm", status.className)}>{status.label}</span>
        </div>
        <div className="mt-1 flex h-6 items-center gap-3.5 text-sm text-[#737373]">
          <span>{unit.floor}</span>
          <span className="flex items-center gap-1.5">
            <Users className="size-4" />
            {unit.guests}
          </span>
          <span className="flex items-center gap-1.5">
            <BedDouble className="size-4" />
            {unit.beds}
          </span>
          {unit.alerts && (
            <span className="flex items-center gap-1.5 text-[#cb4f14]">
              <TriangleAlert className="size-4" />
              {unit.alerts}
            </span>
          )}
        </div>
      </div>
      <button type="button" aria-label="تقویم واحد" className="flex size-[33px] items-center justify-center">
        <CalendarDays className="size-[18px]" />
      </button>
    </li>
  )
}

function Sidebar() {
  return (
    <aside className="flex w-[298px] shrink-0 flex-col bg-[#fafafa] px-[18px]">
      <div className="mt-[18px] flex h-[37px] items-center gap-3 px-2">
        <Building className="size-[22px]" />
        <span className="text-[19px] font-medium text-black">اقامتگاه‌های سپیدار</span>
      </div>
      <button
        type="button"
        className="mt-5 flex h-[37px] shrink-0 items-center gap-2.5 rounded-[10px] bg-[#171717] px-2.5 text-base text-[#fafafa]"
      >
        <CirclePlus className="size-[18px]" />
        پذیرش جدید
      </button>
      <nav className="mt-[10px] min-h-0 flex-1 overflow-hidden">
        <NavList items={mainNav} />
        <div className="mt-[21px]">
          <NavLabel>عملیات</NavLabel>
          <NavList items={operationsNav} />
        </div>
        <div className="mt-[21px]">
          <NavLabel>تحلیل</NavLabel>
          <NavList items={analysisNav} />
        </div>
        <div className="mt-[21px]">
          <NavLabel>مدیریت</NavLabel>
        </div>
      </nav>
      <div className="mb-5 flex h-[53px] shrink-0 items-center gap-2.5 px-2.5">
        <span className="flex size-[37px] items-center justify-center rounded-full border border-[#e5e5e5] bg-[#f5f5f5] text-base text-[#737373]">
          نش
        </span>
        <div className="flex-1">
          <p className="text-base leading-6 font-medium text-black">نگار شریفی</p>
          <p className="text-sm leading-5 text-[#666]">ادمین</p>
        </div>
        <button type="button" aria-label="منوی کاربر" className="flex w-[18px] justify-center">
          <EllipsisVertical className="size-[18px]" />
        </button>
      </div>
    </aside>
  )
}

function BuildingMap() {
  return (
    <div>
      <div className="relative h-[633px] overflow-hidden rounded-2xl border border-[#e5e5e5]">
        <BaseMap />
        {pins.map((pin) => (
          <button
            key={pin.label}
            type="button"
            style={{ left: `${pin.x}%`, top: `${pin.y}%` }}
            className={clsx(
              "absolute flex -translate-x-1/2 -translate-y-1/2 items-center gap-2 rounded-full bg-[#009966] font-bold whitespace-nowrap text-white",
              pin.selected
                ? "h-10 border-[3px] border-[#171717] px-4 text-sm ring-2 ring-white"
                : "h-9 border-2 border-white px-3.5 text-[13px] shadow-md",
            )}
          >
            <span>{pin.label}</span>
            <span>·</span>
            <span>{pin.free}</span>
          </button>
        ))}
        <div className="absolute top-3 left-3 flex flex-col overflow-hidden rounded-[5px] border-2 border-black/25 bg-clip-padding text-black">
          <button type="button" aria-label="بزرگ‌نمایی" className="flex h-[35px] w-[34px] items-center justify-center border-b border-[#ccc] bg-white">
            <svg viewBox="0 0 14 14" className="size-3.5" aria-hidden="true">
              <path d="M7 0V14M0 7H14" stroke="currentColor" strokeWidth="2" />
            </svg>
          </button>
          <button type="button" aria-label="کوچک‌نمایی" className="flex h-[34px] w-[34px] items-center justify-center bg-white">
            <svg viewBox="0 0 14 14" className="size-3.5" aria-hidden="true">
              <path d="M0 7H14" stroke="currentColor" strokeWidth="2" />
            </svg>
          </button>
        </div>
        <div
          dir="ltr"
          className="absolute right-0 bottom-0 flex h-5 items-center gap-1 bg-white/80 px-1.5 font-['Liberation_Sans',sans-serif] text-sm text-[#333]"
        >
          <svg viewBox="0 0 12 8" className="h-[9px] w-3.5" aria-hidden="true">
            <path fill="#4C7BE1" d="M0 0h12v4H0z" />
            <path fill="#FFD500" d="M0 4h12v3H0z" />
            <path fill="#E0BC00" d="M0 7h12v1H0z" />
          </svg>
          <a href="#" className="text-[#0078a8]">Leaflet</a>
          <span>|</span>
          <span>©</span>
          <a href="#" className="text-[#0078a8]">OpenStreetMap</a>
        </div>
      </div>
      <ul className="mt-2 flex items-center gap-[18px] text-sm leading-6 text-[#666]">
        {legend.map((item) => (
          <li key={item.label} className="flex items-center gap-2">
            <span className={clsx("size-3 rounded-full", item.dot)} />
            {item.label}
          </li>
        ))}
      </ul>
    </div>
  )
}

function BuildingPanel() {
  return (
    <section className="rounded-2xl border border-[#e5e5e5] px-[18px] pt-[18px]">
      <div className="flex items-start justify-between">
        <div>
          <div className="flex items-center gap-2.5">
            <h2 className="text-[19px] leading-7 font-medium text-black">برج یاس</h2>
            <span className="flex h-6 items-center rounded-full bg-[#009966] px-2.5 text-sm font-medium text-white">واحد خالی دارد</span>
          </div>
          <p className="mt-1 text-sm leading-6 text-[#737373]">ولنجک · ولنجک، خیابان یکم، پلاک ۲۴</p>
        </div>
        <button type="button" aria-label="بستن" className="flex size-[33px] items-center justify-center">
          <X className="size-[18px]" />
        </button>
      </div>

      <div className="mt-2.5 grid grid-cols-3 gap-2.5">
        {buildingStats.map((stat) => (
          <StatCard key={stat.label} {...stat} />
        ))}
      </div>

      <div className="mt-5 flex gap-3">
        <button type="button" className="flex h-8 items-center gap-1.5 rounded-[10px] border border-[#e5e5e5] px-3 text-[15px] font-medium">
          <LayoutGrid className="size-4" />
          برد ساختمان
        </button>
        <button type="button" className="flex h-8 items-center gap-1.5 rounded-[10px] bg-[#171717] px-3 text-[15px] font-medium text-[#fafafa]">
          <Search className="size-4" />
          جست‌وجوی واحد اینجا
        </button>
      </div>

      <h3 className="mt-[18px] text-base leading-6 font-medium">واحدها</h3>
      <ul className="mt-[5px] rounded-t-xl border border-b-0 border-[#e5e5e5]">
        {units.map((unit) => (
          <UnitRow key={unit.name} unit={unit} />
        ))}
      </ul>
    </section>
  )
}

export default function App() {
  return (
    <div dir="rtl" className="flex h-screen overflow-hidden bg-[#fafafa] font-['Vazirmatn','DejaVu_Sans',sans-serif] text-[#0a0a0a]">
      <Sidebar />

      <main className="ml-[9px] min-w-0 flex-1 border-x border-[#ebebeb] bg-white">
        <div className="h-[7px] border-b border-[#e5e5e5]" />
        <div className="flex flex-col gap-7 px-[27px] pt-7">
          <div className="flex items-end justify-between">
            <div>
              <h1 className="text-[23px] leading-8 font-medium text-black">نقشه‌ی عملیاتی</h1>
              <p className="text-base leading-8 text-[#737373]">
                ساختمان‌ها روی نقشه با ظرفیت واقعی: خالی، پر، در حال آماده‌سازی، خارج از سرویس
              </p>
            </div>
            <button type="button" className="mb-[3px] flex h-[37px] items-center gap-2 rounded-xl border border-[#e5e5e5] px-3 text-base font-medium">
              <Search className="size-[18px]" />
              جست‌وجوی کامل واحد
            </button>
          </div>

          <form className="mt-[5px] grid h-[98px] grid-cols-[1.2fr_1fr_1fr_130px_133px] items-start gap-[15px] rounded-2xl border border-[#e5e5e5] px-3.5 pt-3">
            <div className="flex flex-col gap-2.5">
              <label htmlFor="region" className="text-base leading-6 font-medium">
                منطقه
              </label>
              <div className="relative">
                <select id="region" className="h-[37px] w-full appearance-none rounded-xl border border-[#e5e5e5] bg-white px-3 text-base">
                  <option>همه‌ی مناطق</option>
                </select>
                <ChevronDown className="pointer-events-none absolute top-2.5 left-3 size-[18px] text-[#666]" />
              </div>
            </div>
            <DateField id="check-in" label="ورود" />
            <DateField id="check-out" label="خروج" />
            <div className="flex flex-col gap-2.5">
              <label htmlFor="guests" className="text-base leading-6 font-medium">
                نفرات
              </label>
              <input id="guests" type="text" inputMode="numeric" className="h-[37px] w-full rounded-xl border border-[#e5e5e5] px-3 text-base" />
            </div>
            <button
              type="submit"
              disabled
              className="mt-[35px] flex h-[35px] items-center justify-center gap-2 rounded-[10px] bg-[#8b8b8b] text-base font-medium text-white"
            >
              <Search className="size-[18px]" />
              واحدهای آزاد
            </button>
          </form>

          <div className="grid grid-cols-8 gap-2.5">
            {overview.map((stat) => (
              <StatCard key={stat.label} {...stat} />
            ))}
          </div>

          <div className="grid grid-cols-[1.9fr_1fr] items-start gap-5 pt-px">
            <BuildingMap />
            <BuildingPanel />
          </div>
        </div>
      </main>
    </div>
  )
}
